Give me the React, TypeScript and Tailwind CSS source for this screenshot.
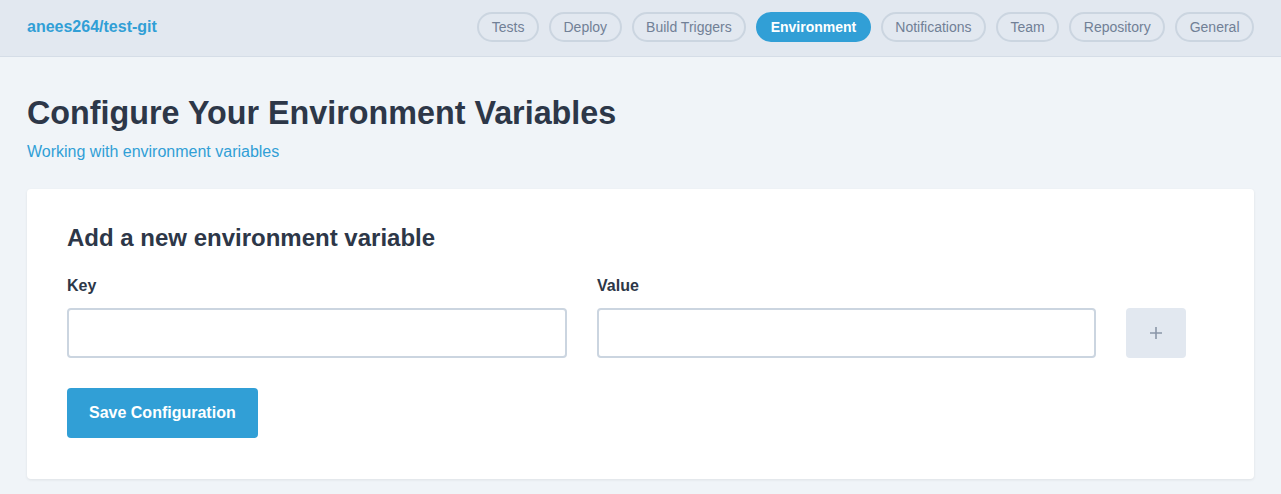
import React from 'react';

const tabs = ['Tests', 'Deploy', 'Build Triggers', 'Environment', 'Notifications', 'Team', 'Repository', 'General'];

export default function App() {
  return (
    <div className="min-h-screen bg-[#f0f4f8] font-['Liberation_Sans',Arial,sans-serif] text-[#2d3748]">
      <header className="flex h-[57px] items-center justify-between border-b border-[#d5dde7] bg-[#e2e8f0] px-[27px] pb-[2px]">
        <span className="text-[16px] font-bold text-[#319fd6]">anees264/test-git</span>
        <nav className="flex items-center gap-[10px]">
          {tabs.map((t) =>
            t === 'Environment' ? (
              <span
                key={t}
                className="flex h-[30px] items-center rounded-full border-2 border-[#319fd6] bg-[#319fd6] px-[12.5px] text-[14px] font-bold text-white"
              >
                {t}
              </span>
            ) : (
              <span
                key={t}
                className="flex h-[30px] items-center rounded-full border-2 border-[#cbd5e0] px-[12.5px] text-[14px] text-[#718096]"
              >
                {t}
              </span>
            )
          )}
        </nav>
      </header>

      <main className="px-[27px] pt-[36px]">
        <h1 className="text-[32.3px] leading-[40px] font-bold text-[#2d3748]">Configure Your Environment Variables</h1>
        <p className="mt-[7px] text-[16px] text-[#319fd6]">Working with environment variables</p>

        <section className="mt-[25px] rounded-[4px] bg-white px-[40px] pt-[34px] pb-[41px] shadow-[0_1px_3px_rgba(0,0,0,0.08)]">
          <h2 className="text-[24px] leading-[30px] font-bold text-[#2d3748]">Add a new environment variable</h2>
          <div className="mt-[21px] flex items-end gap-[30px]">
            <label className="flex flex-col">
              <span className="text-[16px] font-bold text-[#2d3748]">Key</span>
              <input className="mt-[10px] h-[50px] w-[500px] rounded-[4px] border-2 border-[#cbd5e0] bg-white px-3 outline-none" />
            </label>
            <label className="flex flex-col">
              <span className="text-[16px] font-bold text-[#2d3748]">Value</span>
              <input className="mt-[10px] h-[50px] w-[499px] rounded-[4px] border-2 border-[#cbd5e0] bg-white px-3 outline-none" />
            </label>
            <button className="flex h-[50px] w-[60px] items-center justify-center rounded-[4px] bg-[#e2e8f0] text-[#8a96a8]">
              <svg width="14" height="14" viewBox="0 0 14 14" fill="none" stroke="currentColor" strokeWidth="1.6">
                <path d="M7 1v12M1 7h12" />
              </svg>
            </button>
          </div>
          <button className="mt-[30px] h-[50px] rounded-[4px] bg-[#319fd6] px-[22px] text-[16px] font-bold text-white">
            Save Configuration
          </button>
        </section>
      </main>
    </div>
  );
}
